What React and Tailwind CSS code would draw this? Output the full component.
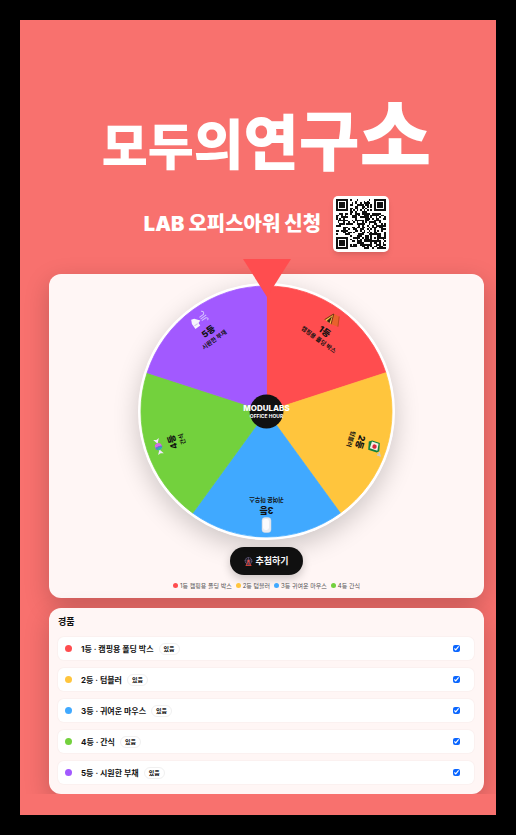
import React from 'react';

const LOGO = [
  { ch: '모', size: 'text-[50px]' },
  { ch: '두', size: 'text-[50px]' },
  { ch: '의', size: 'text-[54px]' },
  { ch: '연', size: 'text-[60px]' },
  { ch: '구', size: 'text-[66px]' },
  { ch: '소', size: 'text-[78px]' },
];

const PRIZES = [
  { rank: '1등', name: '캠핑용 폴딩 박스', color: '#ff4d4f', dot: 'bg-[#ff4d4f]', icon: Tent },
  { rank: '2등', name: '텀블러', color: '#ffc53d', dot: 'bg-[#ffc53d]', icon: Tumbler },
  { rank: '3등', name: '귀여운 마우스', color: '#40a9ff', dot: 'bg-[#40a9ff]', icon: Mouse },
  { rank: '4등', name: '간식', color: '#73d13d', dot: 'bg-[#73d13d]', icon: Candy },
  { rank: '5등', name: '시원한 부채', color: '#a259ff', dot: 'bg-[#a259ff]', icon: Wind },
];

function Tent() {
  return (
    <g>
      <path d="M-7 5 L-3 -5 L3 -6 L8 3 L1 5 Z" fill="#e8622c" />
      <path d="M-7 5 L-3 -5 L1 5 Z" fill="#f5c04a" />
      <path d="M-4.500 5 L-3 -2 L-1 5 Z" fill="#3b2415" />
      <path d="M-3 -5 L1 5 M-3 -5 L-7 5" stroke="#7a2f14" strokeWidth="1" />
      <path d="M3 -6 L8 3" stroke="#b8431d" strokeWidth="0.800" />
    </g>
  );
}

function Tumbler() {
  return (
    <g>
      <path d="M-5 -4 L3 -6 L5 -4 L5 5 L-3 7 L-5 4 Z" fill="#11803f" />
      <path d="M-4 -3 L3 -4 L3 4 L-4 4 Z" fill="#f4efe4" />
      <circle cx="0" cy="0" r="2.200" fill="#d7263d" />
      <path d="M4 -6 L7 -8 L7 -5" stroke="#c9c9d2" strokeWidth="1.500" fill="none" />
    </g>
  );
}

function Mouse() {
  return (
    <g>
      <rect x="-4.500" y="-7.500" width="9" height="15" rx="3" fill="#e9ebf0" stroke="#d9dde3" strokeWidth="0.500" />
      <rect x="-2.500" y="-5" width="6" height="11" rx="2.500" fill="#fbfbfd" />
    </g>
  );
}

function Candy() {
  return (
    <g>
      <path d="M-3 0 L-8 -3 L-7 0 L-8 3 Z M3 0 L8 -3 L7 0 L8 3 Z" fill="#f2e6ff" />
      <circle r="3.600" fill="#d66be8" />
      <path d="M0 -3.600 A3.600 3.600 0 0 0 0 3.600 Z" fill="#2fb7a6" />
      <path d="M-2 -3 Q1 0 -1 3.400" stroke="#7c5ce0" strokeWidth="1" fill="none" />
    </g>
  );
}

function Wind() {
  return (
    <g>
      <path d="M-9 -1 L-7 -5 L-4 -4 L0 1 L-3 2 L-3 5 L-9 5 Z" fill="#f6f4fc" />
      <path d="M-8 2 L-4 2" stroke="#cfc4e8" strokeWidth="1" />
      <path d="M1 -2 H6 Q9 -4 6 -6 M1 0 H8 M1 2 H6 Q9 4 6 5" stroke="#d5c2ff" strokeWidth="1" fill="none" />
    </g>
  );
}

function FerrisWheel() {
  return (
    <svg viewBox="0 0 16 16" className="size-[9px]" aria-hidden="true">
      <circle cx="8" cy="7" r="6" fill="none" stroke="#8578a8" strokeWidth="1.700" strokeDasharray="2 1" />
      <path d="M8 1 V13 M2 7 H14 M4 3 L12 11 M12 3 L4 11" stroke="#7b6fa0" strokeWidth="1" />
      <path d="M8 7 L4 15 M8 7 L12 15 M3 15 H13" stroke="#e0443e" strokeWidth="1.700" fill="none" />
      <circle cx="8" cy="7" r="2" fill="#f0564a" />
    </svg>
  );
}

const QR_SIZE = 29;

function finderAt(x, y, ox, oy) {
  const dx = x - ox;
  const dy = y - oy;
  if (dx < -1 || dy < -1 || dx > 7 || dy > 7) return null;
  const ring = Math.max(Math.abs(dx - 3), Math.abs(dy - 3));
  return ring === 3 || ring <= 1;
}

function qrPath() {
  let seed = 90127;
  let d = '';
  for (let y = 0; y < QR_SIZE; y++) {
    for (let x = 0; x < QR_SIZE; x++) {
      seed = (seed * 1103515 + 12345) % 2147483648;
      let on = (seed >> 12) % 100 < 55;
      if (y === 6) on = x % 2 === 0;
      if (x === 6) on = y % 2 === 0;
      const ring = Math.max(Math.abs(x - 22), Math.abs(y - 22));
      if (ring <= 2) on = ring !== 1;
      const corners = [[0, 0], [QR_SIZE - 7, 0], [0, QR_SIZE - 7]];
      for (const [ox, oy] of corners) {
        const v = finderAt(x, y, ox, oy);
        if (v !== null) on = v;
      }
      if (on) d += `M${x} ${y}h1v1h-1z`;
    }
  }
  return d;
}

const QR_PATH = qrPath();

const R = 126;

function slicePath(i) {
  const a = (i * 72 * Math.PI) / 180;
  const b = ((i + 1) * 72 * Math.PI) / 180;
  return `M0 0 L${R * Math.sin(a)} ${-R * Math.cos(a)} A${R} ${R} 0 0 1 ${R * Math.sin(b)} ${-R * Math.cos(b)} Z`;
}

function Wheel() {
  return (
    <div className="relative">
      <svg
        viewBox="-129 -129 258 258"
        className="block w-[257px] rounded-full shadow-[0_8px_26px_rgba(0,0,0,0.2)]"
        role="img"
        aria-label="경품 룰렛"
      >
        <circle r="129" fill="#fff" />
        {PRIZES.map((p, i) => (
          <path key={p.rank} d={slicePath(i)} fill={p.color} stroke={p.color} strokeWidth="0.800" />
        ))}
        {PRIZES.map((p, i) => {
          const Icon = p.icon;
          return (
            <g key={p.rank} transform={`rotate(${i * 72 + 36})`} textAnchor="middle" fill="#111">
              <g transform="translate(0 -114)">
                <Icon />
              </g>
              <text y="-96" className="text-[9px] font-extrabold">{p.rank}</text>
              <text y="-87" className="text-[6px] font-bold">{p.name}</text>
            </g>
          );
        })}
        <circle r="17" fill="#111" />
        <g textAnchor="middle" fill="#fff">
          <text y="-1" className="text-[8px] font-extrabold">MODULABS</text>
          <text y="7" className="text-[5px] font-bold">OFFICE HOUR</text>
        </g>
      </svg>
      <svg viewBox="0 0 48 38" className="absolute -top-6 left-1/2 w-12 -translate-x-1/2" aria-hidden="true">
        <path d="M0 0 H48 L24 38 Z" fill="#ff4d4f" />
      </svg>
    </div>
  );
}

const CARD = 'rounded-xl bg-[#fff6f5] shadow-[0_8px_26px_rgba(0,0,0,0.2)]';

export default function App() {
  return (
    <div className="min-h-screen bg-black p-5 font-['Inter','Noto_Sans_CJK_KR',sans-serif] text-[#111]">
      <div className="bg-[#f8716e] pb-[21px]">
        <main className="overflow-hidden pr-3 pl-[29px]">
          <h1 className="flex h-[176px] items-baseline-last justify-center pb-1 font-['Noto_Sans_CJK_KR',sans-serif] leading-[98px] font-black text-white">
            {LOGO.map((l) => (
              <span key={l.ch} className={l.size}>{l.ch}</span>
            ))}
          </h1>

          <div className="flex items-center justify-center gap-3">
            <h2 className="text-[20px] leading-8 font-black text-white">LAB 오피스아워 신청</h2>
            <div className="rounded-[5px] bg-white p-[3px] shadow-md">
              <svg viewBox="0 0 29 29" className="block size-[50px]" role="img" aria-label="QR 코드">
                <path d={QR_PATH} fill="#111" shapeRendering="crispEdges" />
              </svg>
            </div>
          </div>

          <section className={`mt-[22px] flex flex-col items-center pt-[9px] pb-2 ${CARD}`}>
            <Wheel />
            <button
              type="button"
              className="mt-[7px] flex h-7 items-center gap-[2px] rounded-full bg-[#111] px-[14px] text-[9px] font-bold text-white shadow-[0_4px_10px_rgba(0,0,0,0.2)]"
            >
              <FerrisWheel />
              추첨하기
            </button>
            <ul className="mt-[6px] flex gap-1 text-[6px] leading-[9px] text-[#555]">
              {PRIZES.slice(0, 4).map((p) => (
                <li key={p.rank} className="flex items-center gap-[2px]">
                  <span className={`size-[5px] rounded-full ${p.dot}`} />
                  {p.rank} {p.name}
                </li>
              ))}
            </ul>
          </section>

          <section className={`mt-[10px] px-[9px] pt-2 pb-[10px] ${CARD}`}>
            <h3 className="text-[9px] leading-3 font-bold">경품</h3>
            <ul className="mt-[9px] mr-px flex flex-col gap-2">
              {PRIZES.map((p) => (
                <li key={p.rank}>
                  <label className="flex h-[23px] items-center rounded-md bg-white pr-[14px] pl-[7px] ring-1 ring-[#fbf1f0]">
                    <span className={`mr-[9px] size-[7px] rounded-full ${p.dot}`} />
                    <span className="text-[8px] font-bold">{p.rank} · {p.name}</span>
                    <span className="ml-[5px] flex h-3 items-center rounded-full border border-[#f0f0f0] px-1 text-[6px] font-bold">
                      있음
                    </span>
                    <input type="checkbox" defaultChecked className="ml-auto size-[7px] accent-[#0a66ff]" />
                  </label>
                </li>
              ))}
            </ul>
          </section>
        </main>
      </div>
    </div>
  );
}
